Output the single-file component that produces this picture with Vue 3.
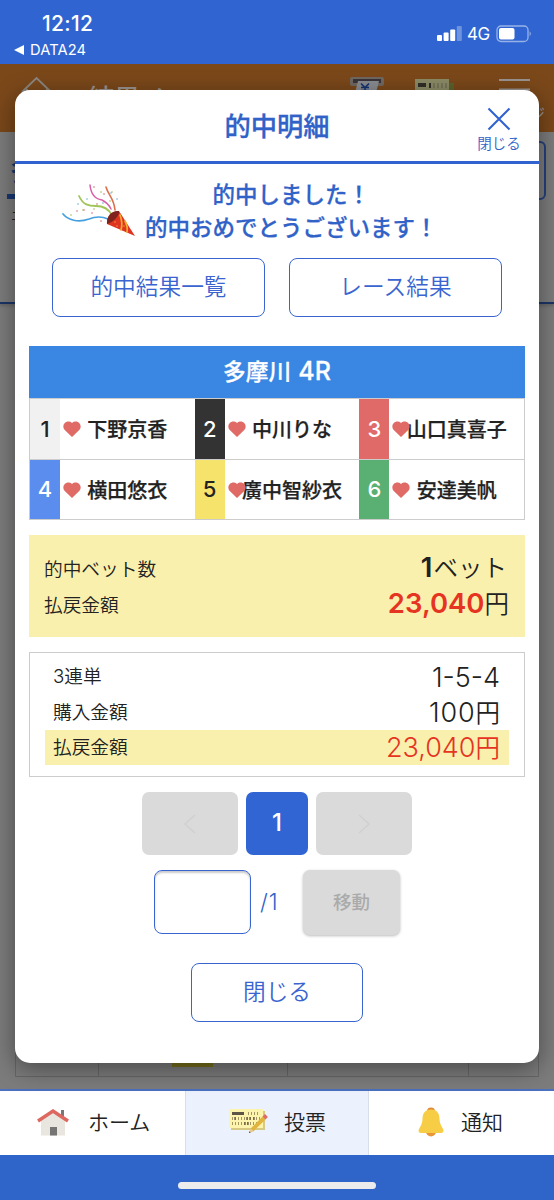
<script setup>
const racers = [
  { no: 1, name: '下野京香', cls: 'b1' },
  { no: 2, name: '中川りな', cls: 'b2' },
  { no: 3, name: '山口真喜子', cls: 'b3' },
  { no: 4, name: '横田悠衣', cls: 'b4' },
  { no: 5, name: '廣中智紗衣', cls: 'b5' },
  { no: 6, name: '安達美帆', cls: 'b6' },
]
</script>

<template>
  <div class="screen">
    <header class="status">
      <div class="clock">
        <div class="time">12:12</div>
        <div class="back">
          <svg width="10" height="10" viewBox="0 0 10 10"><path d="M0 5 10 0V10Z" fill="#fff" /></svg>
          <span>DATA24</span>
        </div>
      </div>
      <div class="signal">
        <svg width="26" height="16" viewBox="0 0 26 16">
          <rect x="0" y="9" width="5" height="6" rx="1" fill="#fff" />
          <rect x="6.6" y="6.5" width="5" height="8.5" rx="1" fill="#fff" />
          <rect x="13.2" y="3.5" width="5" height="11.5" rx="1" fill="#fff" />
          <rect x="19.8" y="0" width="5" height="15" rx="1" fill="#fff" opacity=".3" />
        </svg>
        <span class="net">4G</span>
        <svg width="36" height="18" viewBox="0 0 36 18">
          <rect x="1" y="1" width="31" height="15.5" rx="4" fill="none" stroke="#fff" stroke-opacity=".5" stroke-width="1.3" />
          <rect x="3" y="3" width="15.5" height="11.5" rx="2" fill="#fff" />
          <path d="M33.7 6.3q2 2.4 0 5z" fill="#fff" opacity=".6" />
        </svg>
      </div>
    </header>

    <main class="stage">
      <div class="page">
        <div class="bar">
          <svg class="home" width="34" height="30" viewBox="0 0 34 30"><path d="M2 17 16.500 3 31 17M7 14V29H27V14" fill="none" stroke="#8b8782" stroke-width="1.8" /></svg>
          <span class="bar-title">結果メ</span>
          <svg class="atm" width="34" height="28" viewBox="0 0 34 28">
            <rect width="34" height="9" rx="2" fill="#706860" /><rect x="3" y="2" width="28" height="4" fill="#39343a" />
            <path d="M8 4H29L24 24H3Z" fill="#888b90" /><path d="m11 6.500 4 4 4-4M15 10.500v9M11 10.500h8M11 13.500h8" stroke="#173371" stroke-width="1.6" fill="none" />
          </svg>
          <svg class="slip" width="40" height="28" viewBox="0 0 40 28">
            <path d="M34 4h5v20h-5z" fill="#5c622b" /><path d="M0 0H34V26H0Z" fill="#8b8b67" />
            <path d="M3 4h8v4H3zM14 4h2v5h-2z" fill="#302e28" /><path d="M19 4v5m4-5v5m4-5v5m4-5v5" stroke="#65634d" />
          </svg>
          <svg class="burger" width="31" height="24" viewBox="0 0 31 24"><path d="M0 1H31M0 10.500H31M0 20H31" stroke="#99948f" stroke-width="2.2" /></svg>
          <span class="bar-label">ジ</span>
        </div>
        <div class="venue">
          <div class="venue-name">多</div>
          <div class="venue-sub">エ</div>
          <div class="venue-btn"></div>
        </div>
        <div class="odds"><i></i><i></i><i></i><i></i><b></b></div>
      </div>

      <section class="modal">
        <div class="m-head">
          <h1>的中明細</h1>
          <div class="m-close">
            <svg width="24" height="24" viewBox="0 0 24 24"><path d="M1.5 1.5 22.5 22.5M22.5 1.5 1.5 22.5" stroke="#3062d0" stroke-width="2.1" /></svg>
            <span>閉じる</span>
          </div>
        </div>

        <div class="cheer">
          <svg width="73" height="54" viewBox="62 183 73 54" fill="none" stroke-linecap="round">
            <path d="M63 214C68 220 78 223 89 219Q99 215 108 219" stroke="#45a0df" stroke-width="1.7" />
            <path d="M79 196C83 205 89 206 96 206Q107 206 112 215" stroke="#a0c556" stroke-width="1.8" />
            <path d="M90 185C91 195 95 199 102 200Q108 203 111 209" stroke="#d85fa5" stroke-width="1.5" />
            <path d="M106 187C108 195 114 198 115 210" stroke="#dd704c" stroke-width="1.6" />
            <path d="M107 224Q107 212 119 211L135 236Z" fill="#df3420" />
            <path d="M107 224C106 216 112 210 119 211C120 216 112 223 107 224Z" fill="#7e241c" />
            <path d="M120 215Q123 223 121 230M125 221Q128 227 127 232" stroke="#f4ac32" stroke-width="1.7" />
            <path d="M115 222h0M117 226h0M124 226h0" stroke="#f4ac32" stroke-width="1.4" />
            <path d="M94 187h0M104 194h0M97 204h0M77 211h0M84 210h0M101 221h0M92 213h0" stroke="#cf6864" stroke-width="1.6" />
            <path d="M87 199h0M111 193h0M78 204h0M117 199h0M103 203h0" stroke="#61a8ce" stroke-width="1.5" />
            <path d="M101 192h0M112 192h0M83 210h0M94 209h0M110 201h0M71 215h0" stroke="#9daf46" stroke-width="1.5" />
          </svg>
          <p>的中しました！<br />的中おめでとうございます！</p>
        </div>

        <div class="links">
          <button>的中結果一覧</button>
          <button>レース結果</button>
        </div>

        <div class="race">
          <div class="race-title">多摩川 <span>4R</span></div>
          <div class="grid">
            <div v-for="r in racers" :key="r.no" class="racer">
              <span class="no" :class="r.cls">{{ r.no }}</span>
              <span class="name">{{ r.name }}</span>
              <svg class="heart" width="18" height="16" viewBox="0 0 18 16"><path d="M9 16 1.5 8.7C-1.8 4.2 2.5-.8 7 .7 8.2 1 9 2 9 2.3 9 2 9.8 1 11 .7c4.5-1.5 8.8 3.5 5.5 8Z" fill="#df6a66" /></svg>
            </div>
          </div>
        </div>

        <div class="total">
          <div class="row"><span>的中ベット数</span><span class="val v1"><b>1</b><em>ベット</em></span></div>
          <div class="row"><span>払戻金額</span><span class="val"><b class="red">23,040</b><em>円</em></span></div>
        </div>

        <div class="detail">
          <div class="row"><span class="lab"><u>3</u>連単</span><span class="num">1-5-4</span></div>
          <div class="row"><span class="lab">購入金額</span><span class="num hundred">100<em>円</em></span></div>
          <div class="row pay"><span class="lab">払戻金額</span><span class="num">23,040<em>円</em></span></div>
        </div>

        <div class="pager">
          <button class="off"><svg width="14" height="20" viewBox="0 0 14 20"><path d="M12 1 2 10 12 19" fill="none" stroke="#d0d0d0" stroke-width="1.5" /></svg></button>
          <button class="cur">1</button>
          <button class="off"><svg width="14" height="20" viewBox="0 0 14 20"><path d="M2 1 12 10 2 19" fill="none" stroke="#d0d0d0" stroke-width="1.5" /></svg></button>
        </div>
        <div class="jump">
          <div class="field"></div>
          <span class="of">/1</span>
          <button class="go">移動</button>
        </div>
        <button class="shut">閉じる</button>
      </section>
    </main>

    <nav class="tabs">
      <div class="tab t1">
        <svg width="32" height="27" viewBox="0 0 32 27">
          <rect x="24" y="1" width="3" height="8" fill="#777" /><path d="M4 11 16 3 28 11V26.500H4Z" fill="#e9e6df" />
          <path d="M1 12 16 2 31 12" fill="none" stroke="#dc6860" stroke-width="3.4" /><rect x="13" y="18" width="7" height="8.500" fill="#777573" />
        </svg>
        <span>ホーム</span>
      </div>
      <div class="tab t2">
        <svg width="42" height="28" viewBox="0 0 42 28">
          <path d="M3 3H37V22H3Z" fill="#d7c981" /><path d="M1 1H35V20H1Z" fill="#fcf3ad" />
          <path d="M4 4h12v3H4z" fill="#5d5545" />
          <path d="M20 5.500h12M4 10.500h28M4 15.500h28" stroke="#a49662" stroke-width="3" stroke-dasharray="1 2" />
          <path d="M7 9v3m12-3v3m3-3v3m4-3v3m-9 2v3m3-3v3" stroke="#66563c" stroke-width="1.300" />
          <path d="M24 22 36 10" stroke="#e1b43e" stroke-width="4" /><path d="m36 10 2.500-2.500" stroke="#dd6b68" stroke-width="4" /><path d="m21 25 1.600-4.400 2.800 2.800Z" fill="#e9c991" /><path d="m21 25 .5-1.700 1.200 1.200Z" fill="#333" />
        </svg>
        <span>投票</span>
      </div>
      <div class="tab t3">
        <svg width="26" height="30" viewBox="0 0 26 30">
          <circle cx="13" cy="4.500" r="4" fill="#e28c36" /><circle cx="13" cy="24.500" r="5" fill="#e99638" />
          <path d="M13 2.500C7 2.500 4.500 6.500 4.500 12C4.500 18 .5 21 .5 24Q.5 26 3 26H23Q25.500 26 25.500 24C25.500 21 21.500 18 21.500 12C21.500 6.500 19 2.500 13 2.500Z" fill="#f7cd45" />
        </svg>
        <span>通知</span>
      </div>
    </nav>
    <footer class="foot"><div class="indicator"></div></footer>
  </div>
</template>

<style>
body { margin: 0; }
</style>
<style scoped>
* { box-sizing: border-box; }
.screen { width: 554px; height: 1200px; display: flex; flex-direction: column; overflow: hidden; font-family: "Noto Sans CJK JP", sans-serif; color: #222; }
button { font: inherit; padding: 0; display: flex; align-items: center; justify-content: center; }
em, u { font-style: normal; text-decoration: none; }
svg { display: block; flex: none; }

.status { height: 64px; flex: none; background: #3065d1; color: #fff; display: flex; justify-content: space-between; padding: 0 22px 0 14px; font-family: Inter, sans-serif; }
.time { font-size: 21px; font-weight: 500; line-height: 24px; margin: 12px 0 0 28px; letter-spacing: .3px; }
.back { display: flex; align-items: center; gap: 6px; font-size: 14.700px; line-height: 18px; margin-top: 5px; letter-spacing: .1px; }
.signal { display: flex; align-items: center; height: 16px; margin-top: 26px; }
.net { font-size: 17px; font-weight: 400; margin: 0 6px 0 4px; width: 23px; letter-spacing: -.6px; }

.stage { position: relative; flex: 1; }
.page { height: 100%; background: #7c7c7c; display: flex; flex-direction: column; }
.bar { height: 68px; flex: none; background: #7b481a; display: flex; align-items: flex-start; padding-left: 20px; overflow: hidden; }
.home { margin-top: 11px; }
.bar-title { color: #99948f; font-size: 26px; line-height: 38px; margin: 14px 0 0 34px; width: 262px; font-weight: 500; }
.atm { margin-top: 13px; }
.slip { margin: 15px 0 0 31px; }
.burger { margin: 15px 0 0 44px; }
.bar-label { color: #99948f; font-size: 15px; line-height: 20px; margin: 39px 0 0 0; }
.venue { position: relative; height: 172px; flex: none; border-bottom: 2px solid #1c3567; box-shadow: 0 2px 3px #5558; padding: 22px 0 0 7px; }
.venue-name { width: 80px; height: 45px; border-bottom: 5px solid #173774; color: #173774; font-weight: 700; font-size: 26px; line-height: 32px; padding-left: 3px; }
.venue-sub { font-size: 13px; line-height: 20px; padding: 6px 0 0 4px; }
.venue-btn { position: absolute; right: 8px; top: 9px; width: 90px; height: 59px; border: 2px solid #24427c; border-radius: 6px; }
.odds { flex: 1; margin: 0 15px 12px; border: 1px solid #676767; border-top: 0; display: grid; grid-template-columns: 82px 189px 181px 1fr; position: relative; }
.odds i + i { border-left: 1px solid #676767; }
.odds b { position: absolute; left: 156px; bottom: 9px; width: 41px; height: 20px; background: #77701c; }

.modal { position: absolute; left: 15px; top: 26px; width: 524px; height: 973px; background: #fff; border-radius: 15px; box-shadow: 0 6px 24px rgba(0, 0, 0, .42); display: flex; flex-direction: column; align-items: center; }
.m-head { position: relative; width: 100%; height: 74px; border-bottom: 3px solid #3062d0; display: flex; justify-content: center; color: #3062c8; }
h1 { margin: 0; font-size: 26.300px; font-weight: 500; line-height: 69px; -webkit-text-stroke: .3px; }
.m-close { position: absolute; right: 17px; top: 17px; width: 46px; display: flex; flex-direction: column; align-items: center; font-size: 14.500px; line-height: 20px; white-space: nowrap; font-weight: 350; }
.m-close span { margin-top: 2px; }
.cheer { width: 100%; height: 94px; padding-left: 47px; display: flex; align-items: flex-start; gap: 10px; }
.cheer svg { margin-top: 19px; }
.cheer p { margin: 13px 0 0; text-align: center; color: #3062c8; font-size: 22.500px; line-height: 32.500px; font-weight: 500; -webkit-text-stroke: .25px; }
.links { display: flex; gap: 24px; }
.links button, .shut { width: 213px; height: 59px; border: 1.500px solid #3a65d0; border-radius: 8px; background: #fff; color: #3a65d0; font-size: 22.700px; font-weight: 350; padding-bottom: 4px; }
.race { width: 496px; margin-top: 29px; }
.race-title { height: 52px; background: #3a86e3; color: #fff; text-align: center; font-size: 22.700px; line-height: 49px; font-weight: 500; word-spacing: 2px; -webkit-text-stroke: .3px; }
.race-title span { font: 500 25px Inter, sans-serif; }
.grid { display: grid; grid-template-columns: repeat(3, 1fr); border: 1px solid #ccc; border-width: 1px 1px 0; }
.racer { position: relative; display: flex; height: 60.500px; border-bottom: 1px solid #ccc; }
.no { width: 30px; display: flex; align-items: center; justify-content: center; font: 500 22px Inter, sans-serif; color: #fff; }
.b1 { background: #f1f1f1; color: #222; } .b2 { background: #333; } .b3 { background: #df6a68; }
.b4 { background: #5b8def; } .b5 { background: #f6e36c; color: #222; } .b6 { background: #59b072; }
.name { flex: 1; text-align: center; font-size: 20px; line-height: 60px; font-weight: 500; white-space: nowrap; -webkit-text-stroke: .25px; }
.heart { position: absolute; left: 33px; top: 22px; }
.row { display: flex; justify-content: space-between; align-items: center; font-size: 18.700px; font-weight: 350; }
.total { width: 496px; height: 102px; margin-top: 15px; background: #faf0ad; padding: 14px 16px 0 15px; }
.total .row { height: 36.500px; }
.val { display: flex; align-items: baseline; line-height: 33px; padding-bottom: 1px; }
.val b { font: 600 27.500px/33px Inter, sans-serif; }
.val em { font-size: 24.500px; }
.v1 { margin-right: 2px; }
.v1 b { margin-right: 1px; }
.red { color: #e63423; }
.detail { width: 496px; height: 125px; margin-top: 15px; border: 1px solid #ccc; padding: 7px 15px 0; }
.detail .row { height: 35px; padding: 0 9px 0 8px; }
.lab { line-height: 28px; padding-bottom: 4px; }
.detail u { font-family: Inter; }
.num { font: 300 27px/33px Inter, sans-serif; }
.num em { font: 350 24.500px "Noto Sans CJK JP"; line-height: 30px; }
.hundred { letter-spacing: .8px; margin-right: -.8px; }
.pay { background: #faf0ad; }
.pay .num { color: #e63423; }
.pager { display: flex; gap: 8px; margin-top: 15px; }
.pager button { height: 63px; border: 0; border-radius: 7px; }
.off { width: 96px; background: #dadada; }
.pager .cur { width: 62px; background: #3065d3; color: #fff; font: 500 24px Inter, sans-serif; padding-bottom: 3px; }
.jump { display: flex; margin: 15px 0 0; height: 65px; align-items: flex-start; }
.field { width: 97px; height: 64px; border: 1.500px solid #3a65d0; border-radius: 8px; box-shadow: inset 0 2px 2px #ccc; }
.of { width: 52px; padding-left: 9px; font: 300 22.500px/64px Inter, sans-serif; letter-spacing: 1px; color: #3062c8; }
.go { width: 97px; height: 65px; border: 0; border-radius: 7px; background: #dadada; color: #aaa; font-size: 18.500px; font-weight: 500; box-shadow: 0 1px 3px #bbb; padding-bottom: 4px; }
.shut { width: 172px; margin-top: 28px; }

.tabs { height: 66px; flex: none; display: grid; grid-template-columns: 185px 184px 185px; border-top: 2px solid #4a70be; background: #fff; font-size: 21px; font-weight: 350; }
.tab { display: flex; align-items: center; padding-bottom: 2px; }
.tab span { line-height: 30px; padding-bottom: 3px; }
.t1 { padding-left: 37px; gap: 19px; }
.t2 { background: #ebf1fd; border: 1px solid #d9dfea; border-width: 0 1px; padding-left: 42px; gap: 14px; }
.t3 { padding-left: 49px; gap: 17px; }
.foot { height: 45px; flex: none; background: #2f64c9; display: flex; justify-content: center; }
.indicator { width: 198px; height: 7px; border-radius: 4px; background: #ececec; margin-top: 27px; }
</style>
